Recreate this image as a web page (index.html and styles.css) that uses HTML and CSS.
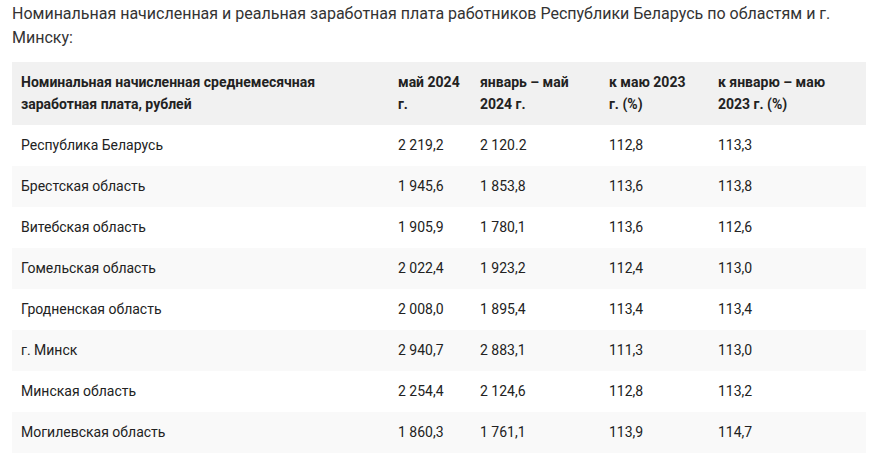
FILE: index.html
```html
<!DOCTYPE html>
<html lang="ru">
<head>
<meta charset="utf-8">
<title>Заработная плата</title>
<link rel="stylesheet" href="styles.css">
</head>
<body>
<div class="page">
  <p class="lead">Номинальная начисленная и реальная заработная плата работников Республики Беларусь по областям и г. Минску:</p>
  <table class="data">
    <colgroup>
      <col class="c1"><col class="c2"><col class="c3"><col class="c4"><col class="c5">
    </colgroup>
    <thead>
      <tr>
        <th>Номинальная начисленная среднемесячная заработная плата, рублей</th>
        <th>май 2024 г.</th>
        <th>январь – май 2024 г.</th>
        <th class="narrow">к маю 2023 г. (%)</th>
        <th>к январю – маю 2023 г. (%)</th>
      </tr>
    </thead>
    <tbody>
      <tr><td>Республика Беларусь</td><td>2 219,2</td><td>2 120.2</td><td>112,8</td><td>113,3</td></tr>
      <tr><td>Брестская область</td><td>1 945,6</td><td>1 853,8</td><td>113,6</td><td>113,8</td></tr>
      <tr><td>Витебская область</td><td>1 905,9</td><td>1 780,1</td><td>113,6</td><td>112,6</td></tr>
      <tr><td>Гомельская область</td><td>2 022,4</td><td>1 923,2</td><td>112,4</td><td>113,0</td></tr>
      <tr><td>Гродненская область</td><td>2 008,0</td><td>1 895,4</td><td>113,4</td><td>113,4</td></tr>
      <tr><td>г. Минск</td><td>2 940,7</td><td>2 883,1</td><td>111,3</td><td>113,0</td></tr>
      <tr><td>Минская область</td><td>2 254,4</td><td>2 124,6</td><td>112,8</td><td>113,2</td></tr>
      <tr><td>Могилевская область</td><td>1 860,3</td><td>1 761,1</td><td>113,9</td><td>114,7</td></tr>
    </tbody>
  </table>
</div>
</body>
</html>
```

FILE: styles.css
```css
html, body {
  margin: 0;
  padding: 0;
  background: #ffffff;
}
.page {
  padding: 2px 11px 0 12px;
  font-family: Roboto, "Liberation Sans", Arial, sans-serif;
  color: #222222;
}
.lead {
  margin: 0 0 12px 0;
  font-size: 16px;
  line-height: 24px;
  color: #333333;
}
.data {
  width: 854px;
  border-collapse: collapse;
  table-layout: fixed;
  font-size: 14px;
}
.c1 { width: 377px; }
.c2 { width: 82px; }
.c3 { width: 129px; }
.c4 { width: 109px; }
.c5 { width: 157px; }
.data th {
  background: #f1f1f1;
  font-weight: 700;
  text-align: left;
  vertical-align: middle;
  line-height: 22px;
  padding: 9px 9px 10px 9px;
  color: #222222;
}
.data th.narrow {
  padding-right: 20px;
}
.data td {
  line-height: 21px;
  padding: 10px 9px;
  text-align: left;
  color: #222222;
}
.data tbody tr:nth-child(even) td {
  background: #f9f9f9;
}
```
